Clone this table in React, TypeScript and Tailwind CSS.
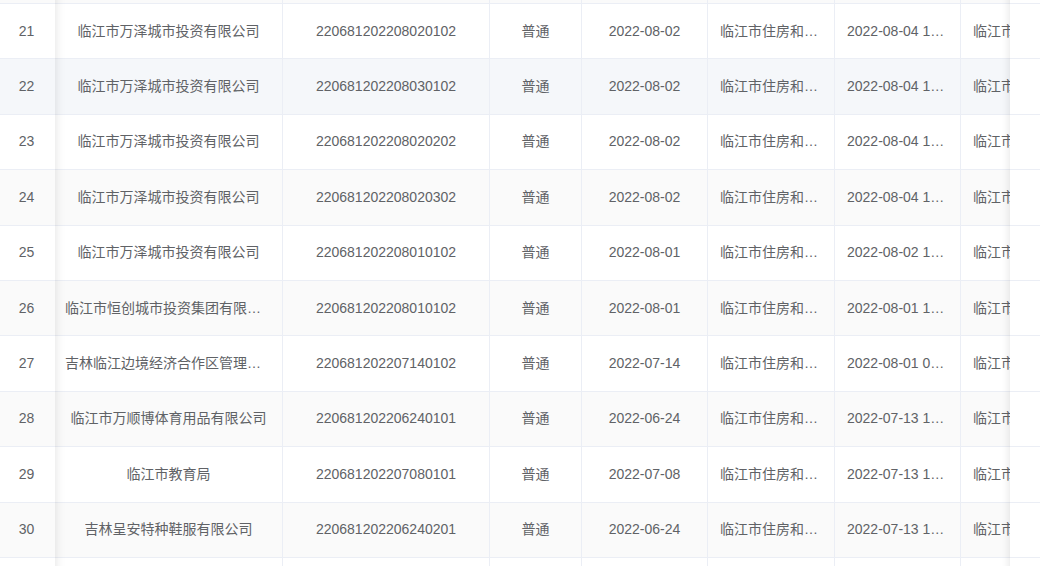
import React from "react";

type Row = {
  no: number | "";
  company: string;
  code: string;
  kind: string;
  date: string;
  org: string;
  time: string;
  next: string;
};

const blank = (no: number): Row => ({ no: "", company: "", code: "", kind: "", date: "", org: "", time: "", next: "" , ...{ key: no } });

const rows: (Row & { key: number })[] = [
  { ...blank(20), key: 20 },
  { key: 21, no: 21, company: "临江市万泽城市投资有限公司", code: "220681202208020102", kind: "普通", date: "2022-08-02", org: "临江市住房和城乡建设局", time: "2022-08-04 10:20:11", next: "临江市住房和城乡建设局" },
  { key: 22, no: 22, company: "临江市万泽城市投资有限公司", code: "220681202208030102", kind: "普通", date: "2022-08-02", org: "临江市住房和城乡建设局", time: "2022-08-04 10:18:42", next: "临江市住房和城乡建设局" },
  { key: 23, no: 23, company: "临江市万泽城市投资有限公司", code: "220681202208020202", kind: "普通", date: "2022-08-02", org: "临江市住房和城乡建设局", time: "2022-08-04 10:16:05", next: "临江市住房和城乡建设局" },
  { key: 24, no: 24, company: "临江市万泽城市投资有限公司", code: "220681202208020302", kind: "普通", date: "2022-08-02", org: "临江市住房和城乡建设局", time: "2022-08-04 10:14:27", next: "临江市住房和城乡建设局" },
  { key: 25, no: 25, company: "临江市万泽城市投资有限公司", code: "220681202208010102", kind: "普通", date: "2022-08-01", org: "临江市住房和城乡建设局", time: "2022-08-02 15:32:10", next: "临江市住房和城乡建设局" },
  { key: 26, no: 26, company: "临江市恒创城市投资集团有限公司", code: "220681202208010102", kind: "普通", date: "2022-08-01", org: "临江市住房和城乡建设局", time: "2022-08-01 14:08:53", next: "临江市住房和城乡建设局" },
  { key: 27, no: 27, company: "吉林临江边境经济合作区管理委员会", code: "220681202207140102", kind: "普通", date: "2022-07-14", org: "临江市住房和城乡建设局", time: "2022-08-01 09:45:20", next: "临江市住房和城乡建设局" },
  { key: 28, no: 28, company: "临江市万顺博体育用品有限公司", code: "220681202206240101", kind: "普通", date: "2022-06-24", org: "临江市住房和城乡建设局", time: "2022-07-13 16:12:33", next: "临江市住房和城乡建设局" },
  { key: 29, no: 29, company: "临江市教育局", code: "220681202207080101", kind: "普通", date: "2022-07-08", org: "临江市住房和城乡建设局", time: "2022-07-13 15:50:02", next: "临江市住房和城乡建设局" },
  { key: 30, no: 30, company: "吉林呈安特种鞋服有限公司", code: "220681202206240201", kind: "普通", date: "2022-06-24", org: "临江市住房和城乡建设局", time: "2022-07-13 15:21:47", next: "临江市住房和城乡建设局" },
  { ...blank(31), key: 31 },
];

// striped rows, row 22 is hovered
const rowBg = (key: number) =>
  key === 22 ? "bg-[#f5f7fa]" : key % 2 === 0 ? "bg-[#fafafa]" : "bg-white";

const cell = "flex h-[55.4px] shrink-0 items-center border-r border-b border-[#ebeef5]";

export default function App() {
  return (
    <div className="h-[566px] w-[1040px] overflow-hidden bg-white font-['Liberation_Sans','Noto_Sans_CJK_SC',sans-serif] text-[14px] text-[#606266]">
      <div className="-mt-[51.4px] flex">
        {/* fixed left: index */}
        <div className="relative z-10 w-[55px] shrink-0 shadow-[0_0_10px_rgba(0,0,0,0.12)]">
          {rows.map((r) => (
            <div
              key={r.key}
              className={`flex h-[55.4px] items-center justify-center pr-[2px] border-b border-[#ebeef5] ${rowBg(r.key)}`}
            >
              {r.no}
            </div>
          ))}
        </div>

        {/* scrolling body */}
        <div className="min-w-0 flex-1 overflow-hidden">
          {rows.map((r) => (
            <div key={r.key} className={`flex w-max ${rowBg(r.key)}`}>
              <div className={`${cell} w-[228px] justify-center px-[10px]`}>
                <span className="truncate">{r.company}</span>
              </div>
              <div className={`${cell} w-[207px] justify-center`}>{r.code}</div>
              <div className={`${cell} w-[92px] justify-center`}>{r.kind}</div>
              <div className={`${cell} w-[126px] justify-center`}>{r.date}</div>
              <div className={`${cell} w-[127px] px-3`}>
                <span className="truncate">{r.org}</span>
              </div>
              <div className={`${cell} w-[126px] px-3`}>
                <span className="truncate">{r.time}</span>
              </div>
              <div className={`${cell} w-[160px] pl-3`}>
                <span className="truncate">{r.next}</span>
              </div>
            </div>
          ))}
        </div>

        {/* fixed right: actions column */}
        <div className="relative z-10 w-[30px] shrink-0 shadow-[0_0_10px_rgba(0,0,0,0.12)]">
          {rows.map((r) => (
            <div key={r.key} className="h-[55.4px] border-b border-[#ebeef5] bg-white" />
          ))}
        </div>
      </div>
    </div>
  );
}
